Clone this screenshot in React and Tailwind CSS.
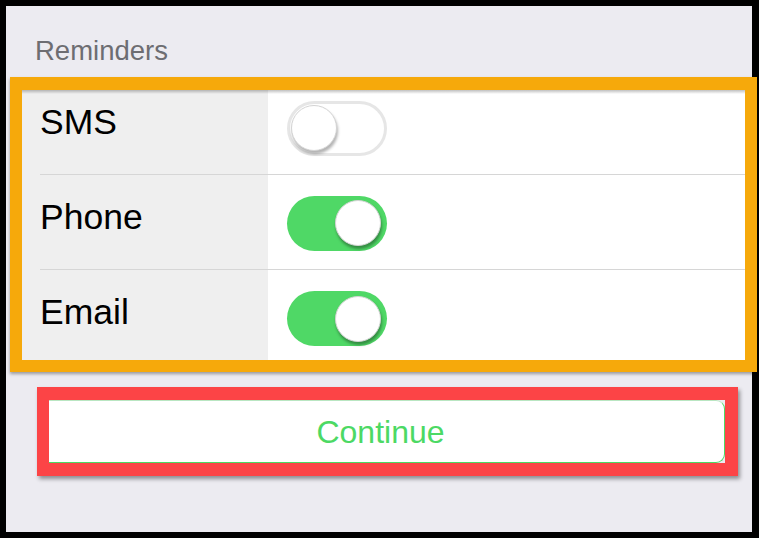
import React from "react";

const rows = [
  { label: "SMS", on: false },
  { label: "Phone", on: true },
  { label: "Email", on: true },
];

const Toggle = ({ on }) => {
  if (on) {
    return (
      <div className="flex h-[55px] w-[100px] items-center justify-end rounded-full bg-[#4fd866] pr-[6px]">
        <div className="h-[46px] w-[46px] rounded-full border border-[#d4d4d4] bg-white shadow-[1px_3px_3px_rgba(0,0,0,0.35)]" />
      </div>
    );
  }
  return (
    <div className="flex h-[55px] w-[100px] items-center rounded-full border-[3px] border-[#e6e6e6] bg-white pl-[1px]">
      <div className="h-[46px] w-[46px] rounded-full border border-[#d4d4d4] bg-white shadow-[1px_3px_3px_rgba(0,0,0,0.3)]" />
    </div>
  );
};

const App = () => {
  return (
    <div
      className="h-[538px] w-[759px] overflow-hidden bg-black pt-[6px] pb-[6px] pl-[6px] pr-[7px]"
      style={{ fontFamily: '"Liberation Sans", Arial, sans-serif' }}
    >
      <div className="flex h-full flex-col bg-[#ecebf1]">
        <div className="pl-[29px] pt-[32px] text-[27.5px] leading-[26px] text-[#6d6d72]">
          Reminders
        </div>

        <div className="relative ml-[4px] mt-[13px] w-[747px] border-[12px] border-t-[13px] border-[#f6a90b] shadow-[0_2px_3px_rgba(0,0,0,0.35)]">
          <div className="h-[270px] overflow-hidden">
            <div className="-mt-[10px]">
              {rows.map((row, i) => (
                <div key={row.label} className="flex h-[95px]">
                  <div className="flex w-[246px] bg-[#efefef] pl-[18px]">
                    <div
                      className={
                        "flex flex-1 items-center " +
                        (i < rows.length - 1 ? "border-b border-[#d6d6d6]" : "")
                      }
                    >
                      <span className="mb-[10px] text-[35.5px] leading-[35px] text-black">
                        {row.label}
                      </span>
                    </div>
                  </div>
                  <div
                    className={
                      "flex flex-1 items-center bg-white pl-[19px] " +
                      (i < rows.length - 1 ? "border-b border-[#d6d6d6]" : "")
                    }
                  >
                    <div className="mt-[2px]">
                      <Toggle on={row.on} />
                    </div>
                  </div>
                </div>
              ))}
            </div>
          </div>
          <div className="pointer-events-none absolute inset-x-0 top-0 h-[4px] bg-gradient-to-b from-black/25 to-transparent" />
        </div>

        <div className="ml-[31px] mt-[15px] w-[701px] border-[13px] border-l-[12px] border-[#fc4446] shadow-[2px_3px_4px_rgba(0,0,0,0.4)]">
          <button className="flex h-[63px] w-full items-center justify-center rounded-r-[9px] border border-l-0 border-t-[#b9e6c2] border-r-[#4cd964] border-b-[#4cd964] bg-white pr-[12px] text-[32px] leading-[32px] text-[#4cd964]">
            Continue
          </button>
        </div>
      </div>
    </div>
  );
};

export default App;
